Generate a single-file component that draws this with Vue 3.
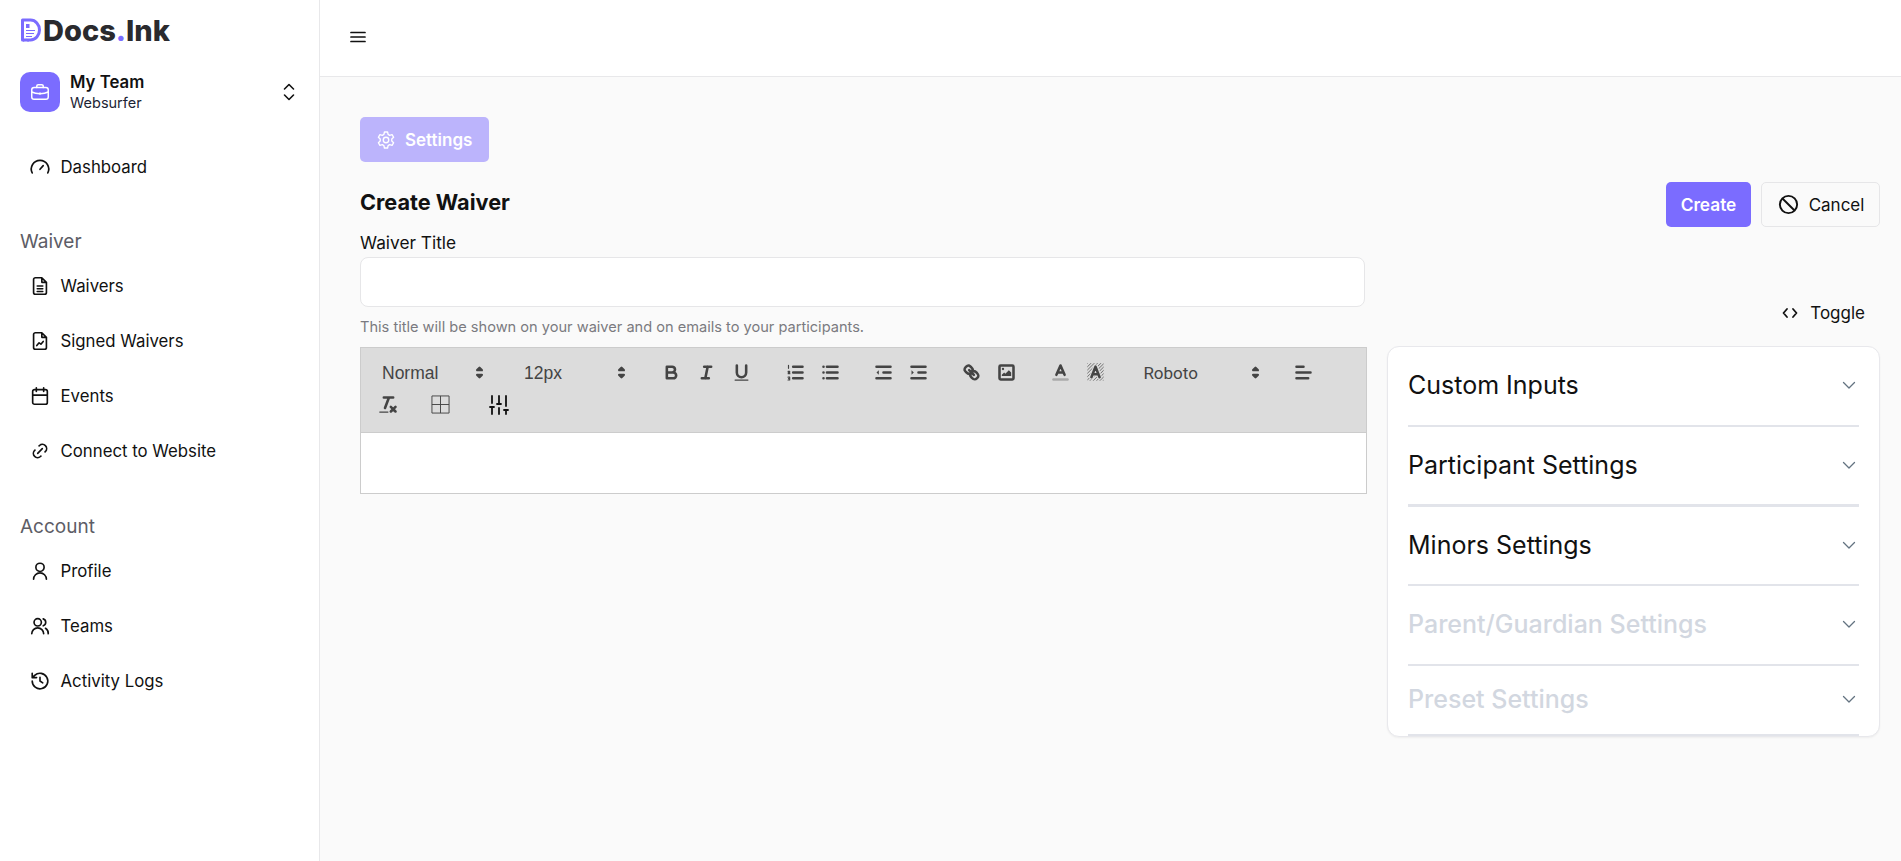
<script setup>
const waiverNav = [
  { label: 'Waivers', icon: 'doc' },
  { label: 'Signed Waivers', icon: 'signed' },
  { label: 'Events', icon: 'cal' },
  { label: 'Connect to Website', icon: 'link' },
]
const accountNav = [
  { label: 'Profile', icon: 'user' },
  { label: 'Teams', icon: 'users' },
  { label: 'Activity Logs', icon: 'history' },
]
const panels = [
  { label: 'Custom Inputs', muted: false, h: 80 },
  { label: 'Participant Settings', muted: false, h: 80 },
  { label: 'Minors Settings', muted: false, h: 79 },
  { label: 'Parent/Guardian Settings', muted: true, h: 80 },
  { label: 'Preset Settings', muted: true, h: 70 },
]
const iconPaths = {
  gauge: 'M3.5 18.5a9.5 9.5 0 1 1 17 0M12 14.500l3.500-4',
  doc: 'M14 3H7a2 2 0 0 0-2 2v14a2 2 0 0 0 2 2h10a2 2 0 0 0 2-2V8zM14 3v5h5M9 12h6M9 15h6M9 18h6',
  signed: 'M14 3H7a2 2 0 0 0-2 2v14a2 2 0 0 0 2 2h10a2 2 0 0 0 2-2V8zM14 3v5h5M8.500 17l2.500-3 2 1.500 2.500-3',
  cal: 'M6 5h12a2 2 0 0 1 2 2v12a2 2 0 0 1-2 2H6a2 2 0 0 1-2-2V7a2 2 0 0 1 2-2zM8 3v4M16 3v4M4 11h16',
  link: 'M9.500 14.500l5-5M11 6.500l.500-.500a4.600 4.600 0 0 1 6.500 6.500l-.500.500M13 17.500l-.500.500A4.600 4.600 0 0 1 6 11.500l.500-.500',
  user: 'M12 3.500a4.500 4.500 0 1 0 0 9 4.500 4.500 0 0 0 0-9zM5 21a7 7 0 0 1 14 0',
  users: 'M9.500 4a4 4 0 1 0 0 8 4 4 0 0 0 0-8zM3 20.500a6.500 6.500 0 0 1 13 0M15.500 4.200a4 4 0 0 1 0 7.600M18 14.500a6.500 6.500 0 0 1 3 6',
  history: 'M12 8v4l3 2M3.500 12a8.500 8.500 0 1 0 2.700-6.200L3.500 8.300M3.500 3.500v4.800h4.800',
}
</script>

<template>
  <div class="app">
    <aside class="sidebar">
      <div class="logo">
        <svg class="logo-mark" viewBox="0 0 22 25" width="23" height="25">
          <path d="M2 2h8a9 10 0 0 1 0 20H2z" fill="#fff" stroke="#7b6cff" stroke-width="3" stroke-linejoin="round" />
          <path d="M5.500 6h3.500v4H5.500z" fill="#7b6cff" />
          <path d="M5.500 12.500h9M5.500 15.500h8M5.500 18.500h6" stroke="#7b6cff" stroke-width="1.200" />
          <path d="M1 19l2 4 3-1.500 2 2" fill="none" stroke="#7b6cff" stroke-width="1.200" />
        </svg>
        <span class="logo-text">Docs<span class="logo-dot">.</span>Ink</span>
      </div>

      <div class="team">
        <div class="team-badge">
          <svg viewBox="0 0 24 24" width="22" height="22" fill="none" stroke="#fff" stroke-width="1.600" stroke-linejoin="round" stroke-linecap="round">
            <rect x="3" y="7" width="18" height="13" rx="2.500" />
            <path d="M8.500 7V5.500a1.500 1.500 0 0 1 1.500-1.500h4a1.500 1.500 0 0 1 1.500 1.500V7M3 12c5 2.500 13 2.500 18 0M12 13v1.500" />
          </svg>
        </div>
        <div class="team-text">
          <div class="team-name">My Team</div>
          <div class="team-sub">Websurfer</div>
        </div>
        <svg class="team-switch" viewBox="0 0 14 20" width="14" height="20" fill="none" stroke="#111" stroke-width="1.600" stroke-linecap="round" stroke-linejoin="round">
          <path d="M2.500 7L7 2.500 11.500 7M2.500 13L7 17.500 11.500 13" />
        </svg>
      </div>

      <nav class="nav">
        <a class="nav-item">
          <svg class="nav-icon" viewBox="0 0 24 24" fill="none"><path :d="iconPaths.gauge" /></svg>
          <span>Dashboard</span>
        </a>
        <div class="nav-head first">Waiver</div>
        <a v-for="n in waiverNav" :key="n.label" class="nav-item">
          <svg class="nav-icon" viewBox="0 0 24 24" fill="none"><path :d="iconPaths[n.icon]" /></svg>
          <span>{{ n.label }}</span>
        </a>
        <div class="nav-head second">Account</div>
        <a v-for="n in accountNav" :key="n.label" class="nav-item">
          <svg class="nav-icon" viewBox="0 0 24 24" fill="none"><path :d="iconPaths[n.icon]" /></svg>
          <span>{{ n.label }}</span>
        </a>
      </nav>
    </aside>

    <div class="right">
      <header class="topbar">
        <svg viewBox="0 0 18 14" width="18" height="14" stroke="#111" stroke-width="1.700" stroke-linecap="round">
          <path d="M2 2.500h14M2 7h14M2 11.500h14" />
        </svg>
      </header>

      <main class="main">
        <button class="settings-btn">
          <svg viewBox="0 0 24 24" width="22" height="22" fill="none" stroke="#fff" stroke-width="1.500" stroke-linejoin="round">
            <path d="M10.300 3.300h3.400l.600 2.600 1.700 1 2.600-.800 1.700 2.900-2 1.800v2.400l2 1.800-1.700 2.900-2.600-.800-1.700 1-.600 2.600h-3.400l-.600-2.600-1.700-1-2.600.800-1.700-2.900 2-1.800v-2.400l-2-1.800 1.700-2.900 2.600.800 1.700-1z" />
            <circle cx="12" cy="12" r="3" />
          </svg>
          <span>Settings</span>
        </button>

        <div class="columns">
          <section class="form">
            <h1 class="title">Create Waiver</h1>
            <label class="field-label">Waiver Title</label>
            <input class="field-input" type="text" />
            <p class="help">This title will be shown on your waiver and on emails to your participants.</p>

            <div class="editor">
              <div class="toolbar">
                <div class="row">
                  <div class="picker w1"><span>Normal</span><svg viewBox="0 0 18 18" class="arr"><path d="M7 11l2 2 2-2zM11 7L9 5 7 7z" /></svg></div>
                  <div class="picker w2"><span>12px</span><svg viewBox="0 0 18 18" class="arr"><path d="M7 11l2 2 2-2zM11 7L9 5 7 7z" /></svg></div>
                  <div class="grp g3">
                    <span class="qb"><svg viewBox="0 0 18 18"><path d="M5 4h4.500a2.500 2.500 0 0 1 0 5H5zM5 9h5.500a2.500 2.500 0 0 1 0 5H5z" /></svg></span>
                    <span class="qb"><svg viewBox="0 0 18 18"><path d="M7 4h6M5 14h6M8 14l2-10" /></svg></span>
                    <span class="qb"><svg viewBox="0 0 18 18"><path d="M5 3v6a4 4 0 0 0 8 0V3" /><rect class="f" x="3" y="15" width="12" height="1" rx=".5" /></svg></span>
                  </div>
                  <div class="grp g4">
                    <span class="qb"><svg viewBox="0 0 18 18"><path d="M7 4h8M7 9h8M7 14h8" /><path class="thin" d="M3 2.800v2.600M2.600 8h1.400v1h-1.200v1h1.400M2.600 13h1.400v1.200h-1v0h1v1.200h-1.400" /></svg></span>
                    <span class="qb"><svg viewBox="0 0 18 18"><path d="M6 4h9M6 9h9M6 14h9M3 4h.01M3 9h.01M3 14h.01" /></svg></span>
                  </div>
                  <div class="grp g5">
                    <span class="qb"><svg viewBox="0 0 18 18"><path d="M3 14h12M3 4h12M9 9h6" /><path class="f" d="M5 7v4L3 9z" /></svg></span>
                    <span class="qb"><svg viewBox="0 0 18 18"><path d="M3 14h12M3 4h12M9 9h6" /><path class="f" d="M3 7v4l2-2z" /></svg></span>
                  </div>
                  <div class="grp g6">
                    <span class="qb"><svg viewBox="0 0 18 18"><path d="M7 7l4 4M8.900 4.600a3.500 3.500 0 0 1 .400 4.700 3.500 3.500 0 0 1-4.700-.400C3.200 7.500 2 6.400 4.200 4.200S7.500 3.200 8.900 4.600zM13.400 9.100a3.500 3.500 0 0 0-4.700-.400 3.500 3.500 0 0 0 .400 4.700c1.400 1.400 2.500 2.500 4.700.400s.900-3.300-.400-4.700z" /></svg></span>
                    <span class="qb"><svg viewBox="0 0 18 18"><rect x="3" y="3" width="12" height="12" rx="1" /><circle class="f" cx="6" cy="6" r="1" /><path class="f" d="M5 12v-1l2-2 1 1 3-3 2 2v3z" /></svg></span>
                  </div>
                  <div class="grp g7">
                    <span class="qb"><svg viewBox="0 0 18 18"><path class="under" d="M3 15h12" /><path d="M5.500 11L9 3l3.500 8M11.600 9H6.400" /></svg></span>
                    <span class="qb"><svg viewBox="0 0 18 18"><defs><pattern id="hatch" width="2" height="2" patternUnits="userSpaceOnUse" patternTransform="rotate(45)"><rect width=".5" height="2" fill="#555" stroke="none" /></pattern></defs><rect x="2" y="1" width="14" height="15" fill="url(#hatch)" stroke="none" /><path class="halo" d="M5.500 13L9 4l3.500 9M11.600 10.500H6.400" /><path d="M5.500 13L9 4l3.500 9M11.600 10.500H6.400" /></svg></span>
                  </div>
                  <div class="picker w3"><span class="roboto">Roboto</span><svg viewBox="0 0 18 18" class="arr"><path d="M7 11l2 2 2-2zM11 7L9 5 7 7z" /></svg></div>
                  <span class="qb g8"><svg viewBox="0 0 18 18"><path d="M3 9h12M3 14h10M3 4h6" /></svg></span>
                </div>
                <div class="row">
                  <span class="qb g0"><svg viewBox="0 0 18 18"><path d="M5 3h8M6 12l3.400-9M11 11l4 4M15 11l-4 4" /><rect class="f" x="1" y="15" width="8" height="1" rx=".5" /></svg></span>
                  <span class="qb g9"><svg viewBox="0 0 20 20" class="table-ic"><path d="M1 1h18v18H1zM10 1v18M1 10h18" /></svg></span>
                  <span class="qb g10"><svg viewBox="0 0 20 20" class="slider-ic"><path d="M3 1v7M3 12v7M1 12h4M10 1v8M10 13v6M8 9h4M17 1v10M17 15v4M15 15h4" /></svg></span>
                </div>
              </div>
              <div class="editor-body"></div>
            </div>
          </section>

          <section class="side">
            <div class="actions">
              <button class="create-btn">Create</button>
              <button class="cancel-btn">
                <svg viewBox="0 0 24 24" width="23" height="23" fill="none" stroke="#111" stroke-width="2"><circle cx="12" cy="12" r="9" /><path d="M5.700 5.700l12.600 12.600" /></svg>
                <span>Cancel</span>
              </button>
            </div>
            <div class="toggle">
              <svg viewBox="0 0 16 12" width="16" height="12" fill="none" stroke="#111" stroke-width="1.800" stroke-linecap="round" stroke-linejoin="round"><path d="M5 2L1.500 6 5 10M11 2l3.500 4L11 10" /></svg>
              <span>Toggle</span>
            </div>
            <div class="panel">
              <div v-for="p in panels" :key="p.label" class="panel-row" :class="{ muted: p.muted }" :style="{ height: p.h + 'px' }">
                <span class="panel-label">{{ p.label }}</span>
                <svg viewBox="0 0 14 14" width="14" height="14" fill="none" stroke="#637381" stroke-width="1.300" stroke-linecap="round" stroke-linejoin="round"><path d="M1.500 4.500L7 10l5.500-5.500" /></svg>
              </div>
            </div>
          </section>
        </div>
      </main>
    </div>
  </div>
</template>

<style>
html, body { margin: 0; background: #fafafa; }
</style>

<style scoped>
.app { display: flex; height: 861px; overflow: hidden; font-family: Inter, "Liberation Sans", sans-serif; color: #111; }
.sidebar { box-sizing: content-box; width: 279px; flex: none; background: #fff; border-right: 1px solid #e8e8ea; padding: 0 20px; }
.logo { display: flex; align-items: center; gap: 0; height: 60px; margin-bottom: 12px; }
.logo-text { font-weight: 800; font-size: 29px; color: #2a2a2e; letter-spacing: 0; }
.logo-dot { color: #7b6cff; }
.team { display: flex; align-items: center; height: 40px; }
.team-badge { width: 40px; height: 40px; border-radius: 10px; background: #7b6cff; display: flex; align-items: center; justify-content: center; flex: none; }
.team-text { margin-left: 10px; flex: 1; }
.team-name { font-size: 16.800px; font-weight: 600; line-height: 20px; }
.team-sub { font-size: 14.500px; line-height: 21px; color: #1c2434; }
.team-switch { margin-right: 3px; }
.nav { margin-top: 43.500px; }
.nav-item { display: flex; align-items: center; gap: 9.500px; height: 55px; padding-left: 9px; font-size: 16.800px; color: #111; }
.nav-item:first-child { height: 22px; }
.nav-icon { width: 22px; height: 22px; stroke: #111; stroke-width: 1.800; stroke-linecap: round; stroke-linejoin: round; flex: none; }
.nav-head { font-size: 19px; color: #5d5d66; line-height: 24px; }
.nav-head.first { margin-top: 52px; margin-bottom: 5px; height: 24px; }
.nav-head.second { margin-top: 36.500px; margin-bottom: 4px; }
.right { flex: 1; min-width: 0; display: flex; flex-direction: column; }
.topbar { height: 74px; flex: none; background: #fff; border-bottom: 1px solid #e8e8ea; display: flex; align-items: center; padding: 0 0 2px 29px; }
.main { padding: 40px 21px 0 40px; }
.settings-btn { display: flex; align-items: center; gap: 8px; height: 45px; width: 129px; padding: 0 15px; background: #bcb4fc; border: 0; border-radius: 5px; color: #fff; font: 600 17px Inter, sans-serif; }
.columns { display: flex; gap: 20px; margin-top: 20px; }
.form { width: 1007px; flex: none; padding-top: 6px; }
.title { margin: 0; font-size: 21.700px; font-weight: 700; line-height: 28px; color: #111; }
.field-label { display: block; margin-top: 14.500px; font-size: 17.300px; line-height: 24px; }
.field-input { display: block; width: 1005px; height: 50px; margin-top: 2px; box-sizing: border-box; background: #fff; border: 1px solid #e6e6e8; border-radius: 8px; }
.help { margin: 10px 0 9px; font-size: 14.600px; line-height: 21px; color: #7a7a80; }
.editor { border: 1px solid #ccc; }
.toolbar { height: 85px; box-sizing: border-box; padding: 13px 13px 0; background: #dcdcdc; border-bottom: 1px solid #ccc; }
.row { display: flex; align-items: center; height: 24px; margin-bottom: 8px; }
.picker { display: flex; align-items: center; justify-content: space-between; height: 24px; padding-left: 8px; box-sizing: border-box; font-family: "Liberation Sans", sans-serif; font-size: 17.500px; color: #444; }
.picker span { margin-top: 2px; }
.picker .arr { width: 21px; height: 21px; fill: #444; stroke: #444; stroke-width: 2; stroke-linejoin: round; }
.picker .roboto { font-family: Roboto, sans-serif; font-size: 17px; margin-top: 0; }
.w1 { width: 116px; margin-right: 26px; }
.w2 { width: 116px; margin-right: 22.400px; }
.w3 { width: 131px; margin-left: 22px; }
.grp { display: flex; }
.g4, .g7 { margin-left: 19px; }
.g5, .g6 { margin-left: 18px; }
.g8 { margin-left: 20px; }
.g0 { margin-left: -3.500px; }
.g9 { margin-left: 17px; }
.g10 { margin-left: 24px; }
.qb { width: 35px; height: 24px; display: flex; align-items: center; justify-content: center; flex: none; }
.qb svg { width: 21px; height: 21px; fill: none; stroke: #444; stroke-width: 2.200; stroke-linecap: round; stroke-linejoin: round; overflow: visible; }
.qb svg .f { fill: #444; stroke: none; }
.qb svg .thin { stroke-width: 1; }
.qb svg .under { stroke: #aaa; }
.qb svg .halo { stroke: #dcdcdc; stroke-width: 4; }
.qb svg.table-ic { width: 19px; height: 19px; stroke-width: 1; stroke-linecap: butt; }
.qb svg.slider-ic { width: 20px; height: 20px; stroke: #111; stroke-width: 1.800; }
.editor-body { height: 60px; background: #fff; }
.side { width: 493px; flex: none; }
.actions { display: flex; justify-content: flex-end; gap: 10px; }
.create-btn { width: 85px; height: 45px; background: #7b6cff; color: #fff; border: 0; border-radius: 5px; font: 600 17.300px Inter, sans-serif; }
.cancel-btn { width: 119px; height: 45px; display: flex; align-items: center; justify-content: center; gap: 9px; padding: 0; background: #fafafa; color: #111; border: 1px solid #e6e6e8; border-radius: 5px; font: 400 17px Inter, sans-serif; }
.toggle { display: flex; align-items: center; justify-content: flex-end; gap: 12px; height: 24px; margin-top: 74px; margin-right: 15px; font-size: 17px; }
.panel { margin-top: 21px; height: 391px; overflow: hidden; background: #fff; border: 1px solid #e8e8ec; border-radius: 12px; box-sizing: border-box; padding: 0 20px; box-shadow: 0 1px 2px rgba(0,0,0,.05); }
.panel-row { display: flex; align-items: center; justify-content: space-between; padding: 0 3px 2px 0; border-bottom: 2px solid #e2e4ea; box-sizing: border-box; }
.panel-row:nth-child(2) { border-bottom-width: 3px; }
.panel-label { font-size: 25px; color: #111; }
.panel-row.muted .panel-label { color: #d2d7e0; font-weight: 500; }
</style>
